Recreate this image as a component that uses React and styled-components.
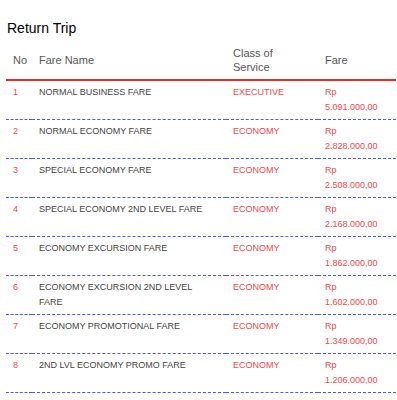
import React from 'react';
import styled, { createGlobalStyle } from 'styled-components';

const Global = createGlobalStyle`
    body{
        margin:0;
        background:#fff;
        font-family:"Liberation Sans", Arial, sans-serif;
    }
`;

const Page = styled.div`
    padding:20px 1px 0 6px;
`;

const Title = styled.h2`
    margin:0 0 4px 1px;
    font-size:14px;
    line-height:16px;
    font-weight:normal;
    color:#000;
`;

const Table = styled.table`
    width:390px;
    border-collapse:collapse;
    table-layout:fixed;
`;

const Head = styled.th`
    width:${p=>p.w - 14}px;
    padding:6px 7px 5px;
    font-size:11px;
    line-height:14px;
    font-weight:normal;
    color:#555;
    text-align:left;
    vertical-align:middle;
    border-bottom:2px solid #e42b2b;
`;

const Row = styled.tr`
    border-bottom:1px dashed #4a5bf0;
`;

const Cell = styled.td`
    padding:4px 14px 3px 7px;
    height:31px;
    font-size:9px;
    line-height:15px;
    vertical-align:top;
    color:${p=>p.red ? '#f2474c' : '#444'};
`;

const fares = [
    ['NORMAL BUSINESS FARE','EXECUTIVE','5.091.000,00'],
    ['NORMAL ECONOMY FARE','ECONOMY','2.828.000,00'],
    ['SPECIAL ECONOMY FARE','ECONOMY','2.508.000,00'],
    ['SPECIAL ECONOMY 2ND LEVEL FARE','ECONOMY','2.168.000,00'],
    ['ECONOMY EXCURSION FARE','ECONOMY','1.862.000,00'],
    ['ECONOMY EXCURSION 2ND LEVEL FARE','ECONOMY','1.602.000,00'],
    ['ECONOMY PROMOTIONAL FARE','ECONOMY','1.349.000,00'],
    ['2ND LVL ECONOMY PROMO FARE','ECONOMY','1.206.000,00'],
];

const App = () => {
    return(
        <>
        <Global/>
        <Page>
            <Title>Return Trip</Title>
            <Table>
                <thead>
                    <tr>
                        <Head w={26}>No</Head>
                        <Head w={194}>Fare Name</Head>
                        <Head w={92}>Class of<br/>Service</Head>
                        <Head w={78}>Fare</Head>
                    </tr>
                </thead>
                <tbody>
                    {fares.map((f,i)=>(
                        <Row key={i}>
                            <Cell red>{i+1}</Cell>
                            <Cell>{f[0]}</Cell>
                            <Cell red>{f[1]}</Cell>
                            <Cell red>Rp<br/>{f[2]}</Cell>
                        </Row>
                    ))}
                </tbody>
            </Table>
        </Page>
        </>
    )
}

export default App;
